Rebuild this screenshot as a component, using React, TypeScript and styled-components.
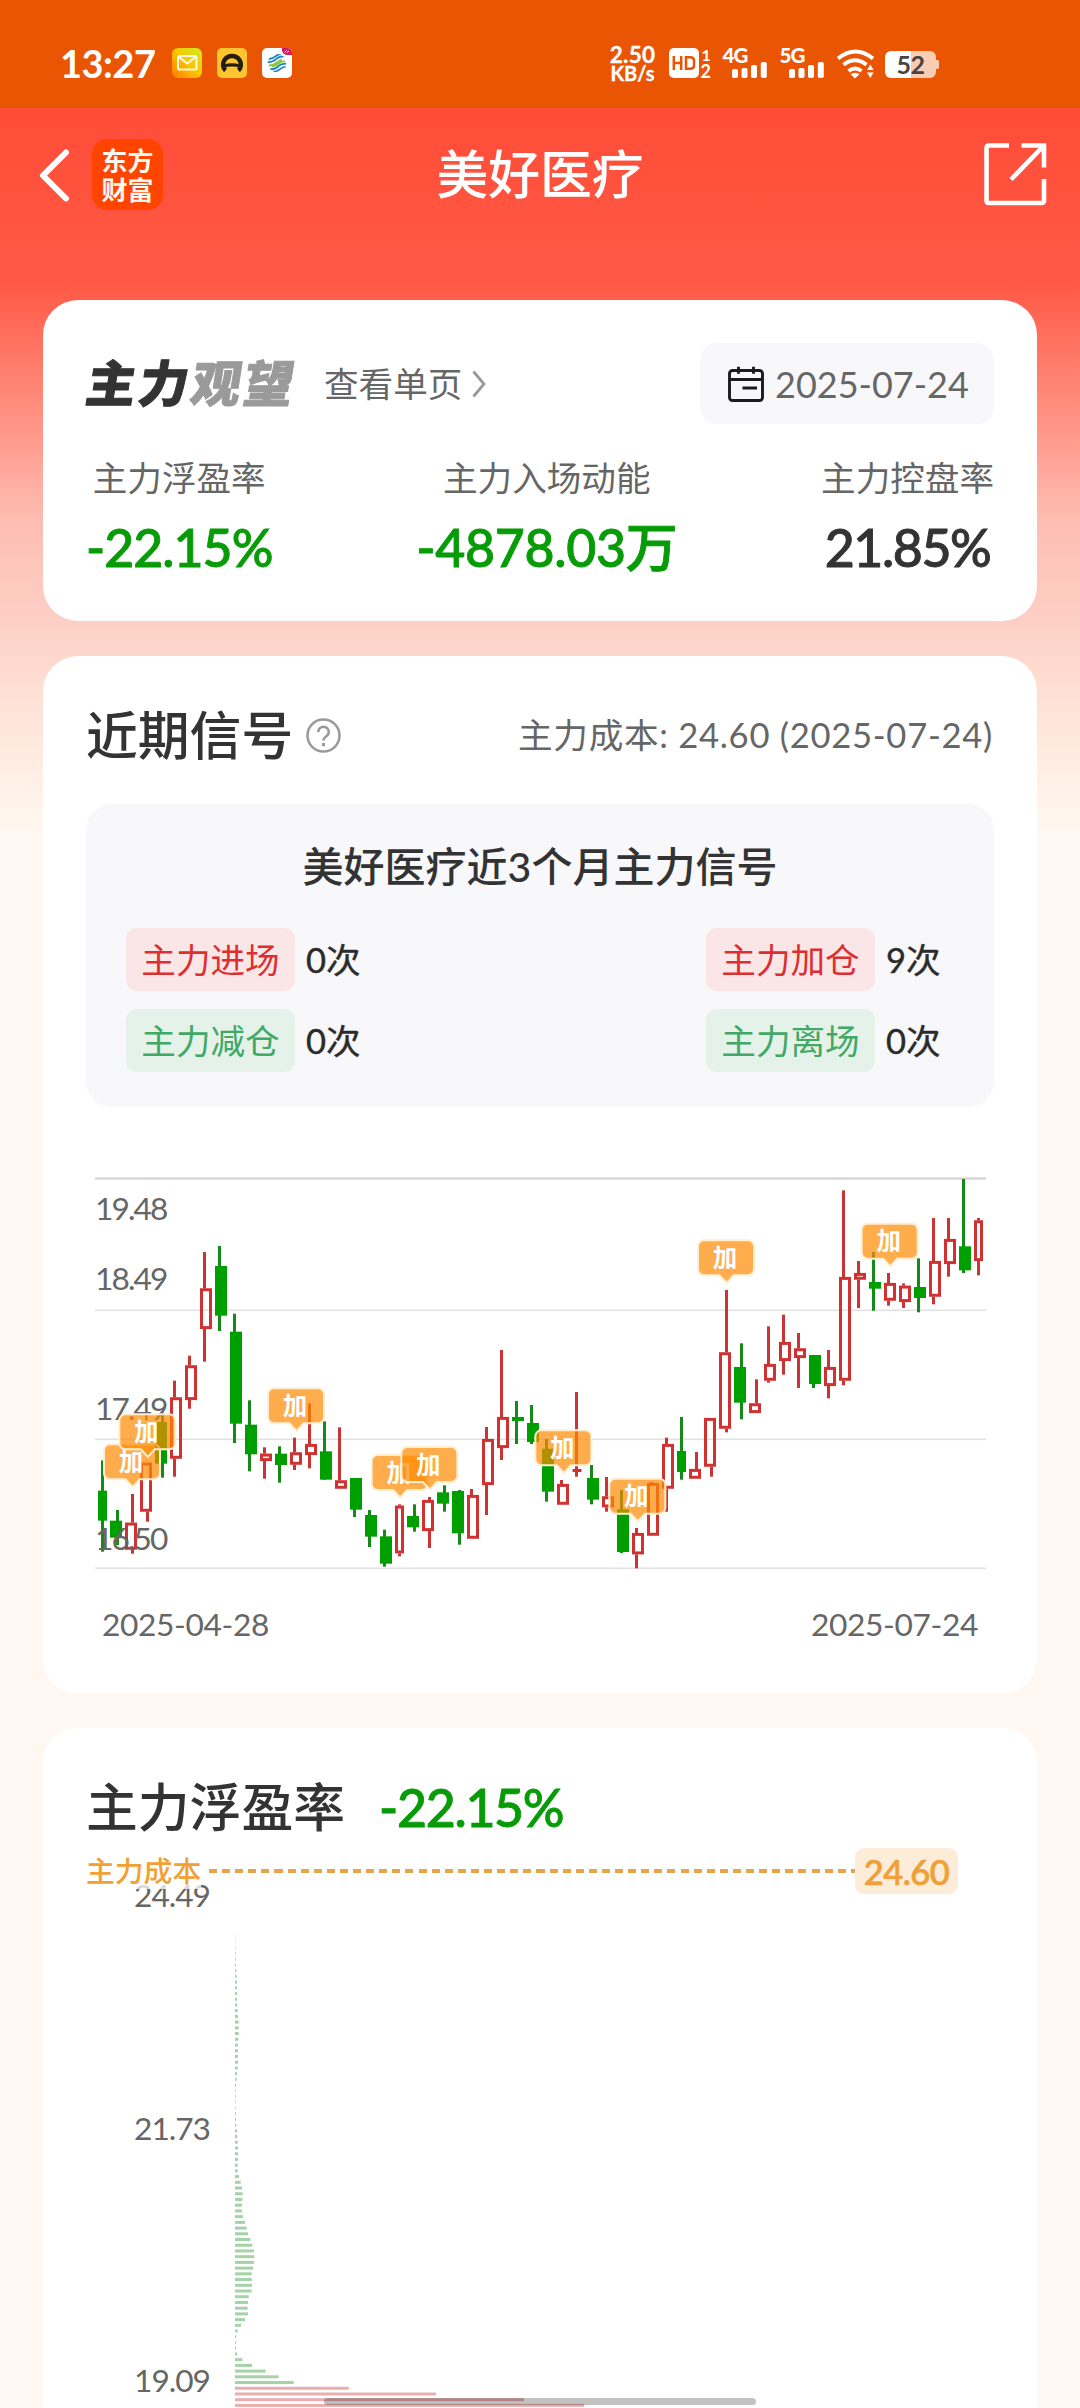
import React from 'react';
import styled, { createGlobalStyle } from 'styled-components';

const Global = createGlobalStyle`
  * { box-sizing: border-box; }
  html, body { margin: 0; padding: 0; }
  body {
    width: 1080px;
    height: 2408px;
    overflow: hidden;
    font-family: Lato, "Noto Sans CJK SC", sans-serif;
    color: #333;
  }
  svg { display: block; flex: none; }
`;

const Page = styled.div`
  width: 1080px;
  height: 2408px;
  overflow: hidden;
  position: relative;
  display: flex;
  flex-direction: column;
  background: linear-gradient(
    180deg, #ff4c37 108px, #ff5a46 285px, #ff9b8d 440px, #febdb2 520px,
    #fdcfc5 620px, #ffe3d8 710px, #fff6ec 815px, #fff8f2 840px, #fff8f2 100%
  );
`;

/* ---------- status bar ---------- */
const StatusBar = styled.div`
  height: 108px;
  flex: none;
  background: #ea5504;
  color: #fff;
  display: flex;
  align-items: center;
  padding: 18px 0 0 60px;
`;
const Clock = styled.div`
  width: 112px;
  font-size: 38px;
  line-height: 40px;
  font-weight: 700;
  letter-spacing: -0.5px;
`;
const AppIcons = styled.div`
  display: flex;
  gap: 15px;
`;
const Speed = styled.div`
  margin-left: 316px;
  width: 49px;
  text-align: center;
  white-space: nowrap;
  font-weight: 700;
  font-size: 22.5px;
  line-height: 19px;
  letter-spacing: 0.3px;
  -webkit-text-stroke: 0.3px #fff;
`;
const SpeedUnit = styled.div`
  font-size: 20px;
  line-height: 18px;
  letter-spacing: 0;
`;
const StatusIcons = styled.div`
  margin-left: 12px;
`;

/* ---------- header ---------- */
const Header = styled.header`
  height: 192px;
  flex: none;
  display: grid;
  grid-template-columns: 1fr auto 1fr;
  align-items: start;
  padding: 31px 39px 0;
`;
const HeaderLeft = styled.div`
  display: flex;
  align-items: center;
  gap: 22px;
`;
const HeaderRight = styled.div`
  display: flex;
  justify-content: flex-end;
  padding-top: 3px;
  margin-right: -6px;
`;
const Brand = styled.div`
  width: 71px;
  height: 71px;
  border-radius: 15px;
  background: #ff4400;
  color: #fff8ee;
  font: 700 26px/29px "Noto Sans CJK SC", sans-serif;
  display: flex;
  flex-direction: column;
  align-items: center;
  padding-top: 6px;
`;
const Title = styled.h1`
  margin: 0;
  color: #fff;
  font-size: 51.8px;
  line-height: 71px;
  font-weight: 500;
`;

/* ---------- cards ---------- */
const Stack = styled.main`
  display: flex;
  flex-direction: column;
  gap: 34.5px;
  padding: 0 43px;
`;
const Card = styled.section<{ $h: number }>`
  height: ${p => p.$h}px;
  flex: none;
  border-radius: 35px;
  background: #fff;
  padding: 43px 43px 0;
`;
const Between = styled.div`
  display: flex;
  align-items: center;
  justify-content: space-between;
`;
const Status = styled.div`
  display: flex;
  align-items: center;
`;
const StatusMark = styled.div`
  font-weight: 900;
  font-size: 49.5px;
  line-height: 79px;
  letter-spacing: 3px;
  transform: skewX(-9deg);
  color: #333;
  margin-left: 1px;
  -webkit-text-stroke: 1px currentColor;
`;
const StatusMuted = styled.span`
  color: #9a9a9a;
`;
const DetailLink = styled.a`
  margin-left: 27px;
  display: flex;
  align-items: center;
  gap: 10px;
  font-size: 34.6px;
  line-height: 50px;
  color: #666;
`;
const DateButton = styled.button`
  border: 0;
  width: 294px;
  height: 81px;
  border-radius: 17px;
  background: #f8f8fa;
  display: flex;
  align-items: center;
  padding: 0 0 0 28px;
  gap: 11px;
  font: 400 36px/50px Lato, sans-serif;
  letter-spacing: 0;
  color: #666;
`;
const Metrics = styled.div`
  display: flex;
  justify-content: space-between;
  margin-top: 29px;
`;
const Metric = styled.div`
  display: flex;
  flex-direction: column;
  align-items: center;
`;
const MetricName = styled.div`
  font-size: 34.6px;
  line-height: 50px;
  color: #666;
`;
const Value = styled.div<{ $tone: string; $track: number }>`
  font-size: 51.8px;
  line-height: 68px;
  margin-top: 10px;
  font-weight: 500;
  letter-spacing: ${p => p.$track}px;
  color: ${p => p.$tone};
  -webkit-text-stroke: 0.9px currentColor;
`;

const SectionTitle = styled.h2`
  margin: 0;
  font-size: 51.8px;
  line-height: 73px;
  padding-bottom: 1px;
  font-weight: 500;
  color: #333;
  display: flex;
  align-items: center;
  gap: 13px;
`;
const Cost = styled.div`
  font-size: 34.6px;
  line-height: 48px;
  padding-bottom: 2px;
  letter-spacing: 0.72px;
  margin-right: 1px;
  color: #666;
`;
const Panel = styled.div`
  height: 303px;
  margin-top: 31px;
  border-radius: 26px;
  background: #f8f8fa;
  padding: 35px 50px 0 40px;
`;
const PanelTitle = styled.div`
  text-align: center;
  margin-right: -10px;
  font-size: 41px;
  line-height: 56px;
  font-weight: 500;
`;
const TagRow = styled(Between)<{ $top: number }>`
  margin-top: ${p => p.$top}px;
`;
const TagItem = styled.div`
  display: flex;
  align-items: center;
  gap: 11px;
  font-size: 34.6px;
  line-height: 63px;
  color: #2b2b2b;
`;
const Tag = styled.span<{ $up?: boolean }>`
  height: 63px;
  width: 169px;
  text-align: center;
  border-radius: 11px;
  background: ${p => (p.$up ? '#fae6e6' : '#e5f2ea')};
  color: ${p => (p.$up ? '#dc2f31' : '#41a866')};
`;
const Count = styled.span`
  width: 58px;
  white-space: nowrap;
  -webkit-text-stroke: 0.4px currentColor;
`;
const ChartBox = styled.div`
  margin: 70px 0 0 9px;
`;
const Dates = styled(Between)`
  margin: 33px 16px 0 16px;
  font-size: 31.7px;
  line-height: 40px;
  letter-spacing: -0.35px;
  color: #666;
`;

const Rate = styled.span`
  color: #079c07;
  margin-left: 21px;
  letter-spacing: -1.3px;
  -webkit-text-stroke: 0.9px currentColor;
`;
const CostLine = styled.div`
  display: flex;
  align-items: center;
  height: 46px;
  margin-top: 3px;
  position: relative;
`;
const CostName = styled.div`
  font-size: 28.8px;
  line-height: 36px;
  font-weight: 500;
  color: #f2a034;
  background: rgba(255, 255, 255, 0.75);
`;
const Dash = styled.div`
  flex: 1;
  margin-left: 8px;
  height: 4px;
  background: repeating-linear-gradient(90deg, #e5a548 0 8px, transparent 8px 13.1px);
`;
const CostBadge = styled.div`
  width: 103px;
  height: 46px;
  margin-right: 36px;
  border-radius: 9px;
  background: #fdecd8;
  color: #f0a038;
  font-size: 34.6px;
  line-height: 47px;
  font-weight: 500;
  text-align: center;
  letter-spacing: -0.6px;
  -webkit-text-stroke: 0.7px currentColor;
`;
const RateChart = styled.div`
  margin: -25px 0 0 -43px;
`;
const HomeBar = styled.div`
  position: absolute;
  left: 324px;
  top: 2398px;
  width: 432px;
  height: 7px;
  border-radius: 4px;
  background: rgba(0, 0, 0, 0.24);
`;

/* ---------- data ---------- */
type Candle = [number, number, number, number, number];
// rise flag, wick top, body top, body bottom, wick bottom (thirds of a pixel)
const candles: Candle[] = [
  [0, 898, 989, 1079, 1172], [0, 1047, 1079, 1130, 1152], [1, 999, 1085, 1166, 1178], [1, 905, 905, 1052, 1082],
  [0, 755, 783, 908, 950], [1, 659, 709, 893, 947], [1, 584, 613, 717, 743], [1, 273, 382, 504, 602],
  [0, 255, 315, 464, 510], [0, 458, 512, 788, 846], [0, 718, 791, 880, 931], [1, 859, 878, 900, 953],
  [0, 856, 878, 912, 965], [1, 830, 874, 911, 927], [1, 727, 849, 882, 922], [0, 781, 871, 956, 956],
  [1, 799, 958, 983, 983], [0, 951, 951, 1046, 1068], [0, 1047, 1062, 1127, 1158], [0, 1106, 1126, 1208, 1217],
  [1, 1030, 1034, 1177, 1186], [0, 1030, 1065, 1099, 1112], [1, 1008, 1017, 1110, 1161], [0, 973, 994, 1028, 1052],
  [0, 987, 990, 1117, 1151], [1, 984, 1002, 1133, 1133], [1, 798, 834, 972, 1062], [1, 567, 768, 861, 897],
  [0, 720, 768, 780, 849], [0, 732, 786, 843, 849], [0, 834, 863, 992, 1022], [1, 957, 969, 1031, 1031],
  [1, 693, 924, 933, 947], [0, 912, 951, 1016, 1030], [1, 948, 1006, 1039, 1052], [0, 987, 1045, 1173, 1176],
  [1, 1101, 1116, 1180, 1222], [1, 963, 966, 1124, 1124], [1, 830, 849, 983, 1052], [0, 768, 870, 933, 956],
  [1, 873, 924, 953, 953], [1, 771, 771, 917, 947], [1, 387, 574, 803, 814], [0, 547, 618, 725, 775],
  [1, 655, 727, 756, 756], [1, 496, 609, 659, 665], [1, 461, 543, 600, 641], [1, 516, 562, 591, 681],
  [0, 582, 582, 669, 681], [1, 567, 618, 675, 712], [1, 88, 348, 659, 673], [1, 300, 336, 356, 441],
  [0, 273, 363, 383, 449], [1, 336, 366, 419, 434], [1, 367, 374, 423, 441], [0, 292, 378, 411, 454],
  [1, 171, 300, 407, 430], [1, 171, 234, 309, 347], [0, 54, 256, 328, 336], [1, 171, 178, 300, 343],
];
const bodyLeft = (i: number) =>
  i === 0 ? 54 : i <= 20 ? 90 + 45 * (i - 1) : i <= 39 ? 981 + 45 * (i - 21) : 1827 + 45 * (i - 40);
const wickX = (i: number) => {
  if (i === 0) return 67;
  if (i <= 4) return 112 + 45 * (i - 1);
  if (i <= 20) return 283 + 45 * (i - 5);
  if (i <= 24) return 1003 + 45 * (i - 21);
  if (i <= 39) return 1174 + 45 * (i - 25);
  if (i <= 44) return 1849 + 45 * (i - 40);
  return 2065 + 45 * (i - 45);
};
const narrow = new Set([0, 20, 39, 59]);
const marks = [[72, 850], [118, 760], [564, 682], [875, 882], [964, 858], [1366, 808], [1588, 953], [1854, 238], [2345, 188]];

const CandleChart = () => (
  <svg width="893" height="394" viewBox="95 1176 893 394">
    <rect x="95" y="1176.5" width="891" height="2" fill="#cfcfcf" />
    {[1309, 1438, 1567].map(y => <rect key={y} x="95" y={y - 0.5} width="891" height="1.6" fill="#e2e2e2" />)}
    {candles.map(([up, wt, bt, bb, wb], i) => {
      const x = 80 + bodyLeft(i) / 3;
      const w = narrow.has(i) ? 9 : 12;
      const wx = 80 + Math.round((wickX(i) - 4.5) / 3);
      const y = (v: number) => 1160 + v / 3;
      const h = (bb - bt) / 3;
      return up ? (
        <g key={i} fill="#cb3434">
          <rect x={wx} y={y(wt)} width="3" height={(bt - wt) / 3} />
          <rect x={wx} y={y(bb)} width="3" height={(wb - bb) / 3} />
          {h < 5 ? (
            <rect x={i === 32 ? x + 0.5 : x} y={y(bt)} width={i === 32 ? 9 : w} height={h} />
          ) : (
            <rect x={x + 1.5} y={y(bt) + 1.4} width={w - 3} height={h - 2.8} fill="none" stroke="#d03232" strokeWidth="3" />
          )}
        </g>
      ) : (
        <g key={i}>
          <rect x={wx} y={y(wt)} width="3" height={(wb - wt) / 3} fill="#168a18" />
          <rect x={x} y={y(bt)} width={w} height={h} fill="#009f00" />
        </g>
      );
    })}
    <g fontSize="31.7" fill="#666" letterSpacing="-1.9">
      <text x="95" y="1219">19.48</text>
      <text x="95" y="1289">18.49</text>
      <text x="95" y="1419">17.49</text>
      <text x="95" y="1549">16.50</text>
    </g>
    {marks.map(([mx, my], i) => {
      const x = 80 + mx / 3;
      const y = 1160 + my / 3;
      return (
        <g key={i}>
          <path
            d={`M${x + 6} ${y}h44a6 6 0 0 1 6 6v23a6 6 0 0 1-6 6h-14.500l-7 7.500l-7-7.500h-15.500a6 6 0 0 1-6-6v-23a6 6 0 0 1 6-6z`}
            fill="rgba(255,138,0,0.7)" stroke="#ffefd0" strokeWidth="2"
          />
          <text x={x + 27} y={y + 26.500} fontSize="24.500" fontWeight="700" fill="#fff" textAnchor="middle">加</text>
        </g>
      );
    })}
  </svg>
);

const spread = [
  1, 1, 1, 2, 2, 3, 4, 5, 6, 6, 6, 6, 7, 8, 9, 11, 11, 11, 10, 9, 9, 9, 9, 8, 6, 5, 3, 2, 2, 2, 2, 3, 3, 4, 6, 7, 8, 9,
  9, 9, 8, 8, 12, 17, 21, 23, 22, 21, 21, 24, 30, 35, 39, 46, 52, 57, 58, 57, 54, 50, 50, 51, 50, 41, 39, 38, 39, 30,
  18, 8, 3, 3, 3, 6, 22, 51, 92, 131, 176, 341, 603, 867, 1047,
];
const ProfileChart = () => (
  <svg width="994" height="539" viewBox="43 1869 994 539">
    <g fontSize="31.7" fill="#666" letterSpacing="-1" textAnchor="end">
      <text x="210" y="1906.500">24.49</text>
      <text x="210" y="2139.500">21.73</text>
      <text x="210" y="2391.500">19.09</text>
    </g>
    {spread.map((v, i) => (
      <rect key={i} x="235" y={1934.800 + i * 5.721} width={v / 3} height="3" fill={v > 200 ? '#e9afb0' : '#a5d2a7'} />
    ))}
  </svg>
);

/* ---------- icons ---------- */
const MailIcon = () => (
  <svg width="30" height="30" viewBox="0 0 30 30">
    <defs>
      <linearGradient id="mail" x1="0" y1="1" x2="1" y2="0">
        <stop offset="0" stopColor="#ff7a00" /><stop offset=".5" stopColor="#ffc400" /><stop offset="1" stopColor="#c8ee20" />
      </linearGradient>
    </defs>
    <rect width="30" height="30" rx="6" fill="url(#mail)" />
    <rect x="6" y="8" width="18.500" height="13.500" rx="1.500" fill="none" stroke="#fffbe0" strokeWidth="2" />
    <path d="M7 9l8.300 6.500L23.500 9" fill="none" stroke="#fffbe0" strokeWidth="2" />
  </svg>
);
const CarIcon = () => (
  <svg width="30" height="30" viewBox="0 0 30 30">
    <rect width="30" height="30" rx="5" fill="#ffc531" />
    <path d="M8.500 22.500C5.500 20 5.500 15 7.500 12A9 9 0 0 1 22.500 12C24.500 15 24.500 20 21.500 22.500" fill="none" stroke="#251f10" strokeWidth="4.500" />
    <path d="M7 16.500q8-2.500 16 0v3q-8-2-16 0z" fill="#251f10" />
  </svg>
);
const MobileIcon = () => (
  <svg width="30" height="30" viewBox="0 0 30 30">
    <defs><clipPath id="globe"><circle cx="15" cy="15" r="9.300" /></clipPath></defs>
    <rect width="30" height="30" rx="5" fill="#fff" />
    <g fill="none" strokeWidth="1.800" clipPath="url(#globe)">
      <path d="M5 10.500q5 1 8-1.800t7-2.700M5 14q6 .5 9-2.800t9-2.700" stroke="#1f86c8" />
      <path d="M7 17.500q5 0 8-3t5-2.500M10 18.500q4-.5 6.500-3t6.500-2" stroke="#8cc63f" />
      <path d="M7 21.500q6 0 9-3t9-2.800M10 24q5 0 8-2.800t7-2.200" stroke="#1f86c8" />
    </g>
    <path d="M20 0h5a5 5 0 0 1 5 5v2h-5a5 5 0 0 1-5-5z" fill="#d81b60" />
    <path d="M22.500 4.500l2-2M25 4.500l2-1.500" stroke="#fff" strokeWidth="1" />
  </svg>
);
const bars = [[0, 69], [9.500, 68], [19, 65], [28.800, 62]];
const SystemIcons = () => (
  <svg width="272" height="50" viewBox="669 38 272 50" fill="#fff">
    <rect x="669" y="48" width="30" height="30" rx="5" />
    <g fill="none" stroke="#ea5504" strokeWidth="2.500">
      <path d="M673.800 56v14M681.200 56v14M674 63h7M686 57.200h4q4 0 4 3v5.600q0 3-4 3h-4z" />
    </g>
    <text x="701.500" y="60.500" fontSize="16" fontWeight="700">1</text>
    <text x="700.500" y="77.500" fontSize="18" fontWeight="700">2</text>
    <text x="722.500" y="62.500" fontSize="20.500" fontWeight="900" letterSpacing="-1">4G</text>
    <text x="779.500" y="62.500" fontSize="20.500" fontWeight="900" letterSpacing="-1">5G</text>
    {[732, 789].map(o => bars.map(([x, y]) => <rect key={o + x} x={o + x} y={y} width="6" height={78 - y} rx="1.800" />))}
    <g fill="none" stroke="#fff" strokeWidth="3.800">
      <path d="M838 58.500q17.500-14 35 0" /><path d="M843.500 64.800q11.500-9 23 0" /><path d="M848.500 71q6.500-5 13 0" />
    </g>
    <path d="M850.500 74.300q4.500-3 9 0l-4.500 4.200z" />
    <path d="M867 70l3.300-5.500 3.300 5.500zM867 72.500h6.600l-3.300 5.500z" />
    <path d="M891 51h20.500v27h-20.500a6 6 0 0 1-6-6v-15a6 6 0 0 1 6-6z" />
    <path d="M911.500 51h18.500a6 6 0 0 1 6 6v3h1.500a1.500 1.500 0 0 1 1.500 1.500v6a1.500 1.500 0 0 1-1.500 1.500h-1.500v3a6 6 0 0 1-6 6h-18.500z" opacity=".7" />
    <text x="896.500" y="74" fontSize="25" fontWeight="700" fill="#484242" letterSpacing="-.6">52</text>
  </svg>
);
const BackIcon = () => (
  <svg width="31" height="54" viewBox="0 0 31 54" fill="none" stroke="#fff" strokeWidth="6" strokeLinecap="round" strokeLinejoin="round">
    <path d="M27 4.500L4 27.500L27 50.500" />
  </svg>
);
const ShareIcon = () => (
  <svg width="64" height="64" viewBox="0 0 64 64" fill="none" stroke="#fff" strokeWidth="4.600">
    <path d="M26 3.500H5.500a2 2 0 0 0-2 2v53.500a2 2 0 0 0 2 2h53.500a2 2 0 0 0 2-2V37" />
    <path d="M38.500 3.500H61V25.500M60.500 4L28 37.500" />
  </svg>
);
const ChevronIcon = () => (
  <svg width="14" height="28" viewBox="0 0 14 28" fill="none" stroke="#999" strokeWidth="2.800">
    <path d="M1.500 1.500L12 14L1.500 26.500" />
  </svg>
);
const CalendarIcon = () => (
  <svg width="36" height="36" viewBox="0 0 36 36" fill="none" stroke="#1c1c1c" strokeWidth="2.900">
    <rect x="1.500" y="4.500" width="33" height="30" rx="3" />
    <path d="M1.500 13.500h33M10.500 .8v7M25.500 .8v7M14.500 22h14.500" />
  </svg>
);
const HelpIcon = () => (
  <svg width="35" height="35" viewBox="0 0 35 35" fill="none" stroke="#9a9a9a" strokeWidth="2.500">
    <circle cx="17.500" cy="17.500" r="16" />
    <path d="M12.300 14a5.200 5.200 0 1 1 8 4.300q-2.800 1.800-2.800 4.200" />
    <path d="M17.500 25v3.200" strokeWidth="3" />
  </svg>
);

const TagEntry = ({ name, count, up }: { name: string; count: string; up?: boolean }) => (
  <TagItem><Tag $up={up}>{name}</Tag><Count>{count}</Count></TagItem>
);

export default function App() {
  return (
    <Page>
      <Global />
      <StatusBar>
        <Clock>13:27</Clock>
        <AppIcons><MailIcon /><CarIcon /><MobileIcon /></AppIcons>
        <Speed>2.50<SpeedUnit>KB/s</SpeedUnit></Speed>
        <StatusIcons><SystemIcons /></StatusIcons>
      </StatusBar>
      <Header>
        <HeaderLeft>
          <BackIcon />
          <Brand><span>东方</span><span>财富</span></Brand>
        </HeaderLeft>
        <Title>美好医疗</Title>
        <HeaderRight><ShareIcon /></HeaderRight>
      </Header>
      <Stack>
        <Card $h={321}>
          <Between>
            <Status>
              <StatusMark>主力<StatusMuted>观望</StatusMuted></StatusMark>
              <DetailLink>查看单页<ChevronIcon /></DetailLink>
            </Status>
            <DateButton><CalendarIcon />2025-07-24</DateButton>
          </Between>
          <Metrics>
            <Metric><MetricName>主力浮盈率</MetricName><Value $tone="#079c07" $track={-1}>-22.15%</Value></Metric>
            <Metric><MetricName>主力入场动能</MetricName><Value $tone="#079c07" $track={-0.3}>-4878.03万</Value></Metric>
            <Metric><MetricName>主力控盘率</MetricName><Value $tone="#333" $track={-1.4}>21.85%</Value></Metric>
          </Metrics>
        </Card>
        <Card $h={1038}>
          <Between>
            <SectionTitle>近期信号<HelpIcon /></SectionTitle>
            <Cost>主力成本: 24.60 (2025-07-24)</Cost>
          </Between>
          <Panel>
            <PanelTitle>美好医疗近3个月主力信号</PanelTitle>
            <TagRow $top={33}>
              <TagEntry name="主力进场" count="0次" up />
              <TagEntry name="主力加仓" count="9次" up />
            </TagRow>
            <TagRow $top={18}>
              <TagEntry name="主力减仓" count="0次" />
              <TagEntry name="主力离场" count="0次" />
            </TagRow>
          </Panel>
          <ChartBox><CandleChart /></ChartBox>
          <Dates><span>2025-04-28</span><span>2025-07-24</span></Dates>
        </Card>
        <Card $h={760}>
          <SectionTitle>主力浮盈率<Rate>-22.15%</Rate></SectionTitle>
          <CostLine>
            <CostName>主力成本</CostName>
            <Dash />
            <CostBadge>24.60</CostBadge>
          </CostLine>
          <RateChart><ProfileChart /></RateChart>
        </Card>
      </Stack>
      <HomeBar />
    </Page>
  );
}
